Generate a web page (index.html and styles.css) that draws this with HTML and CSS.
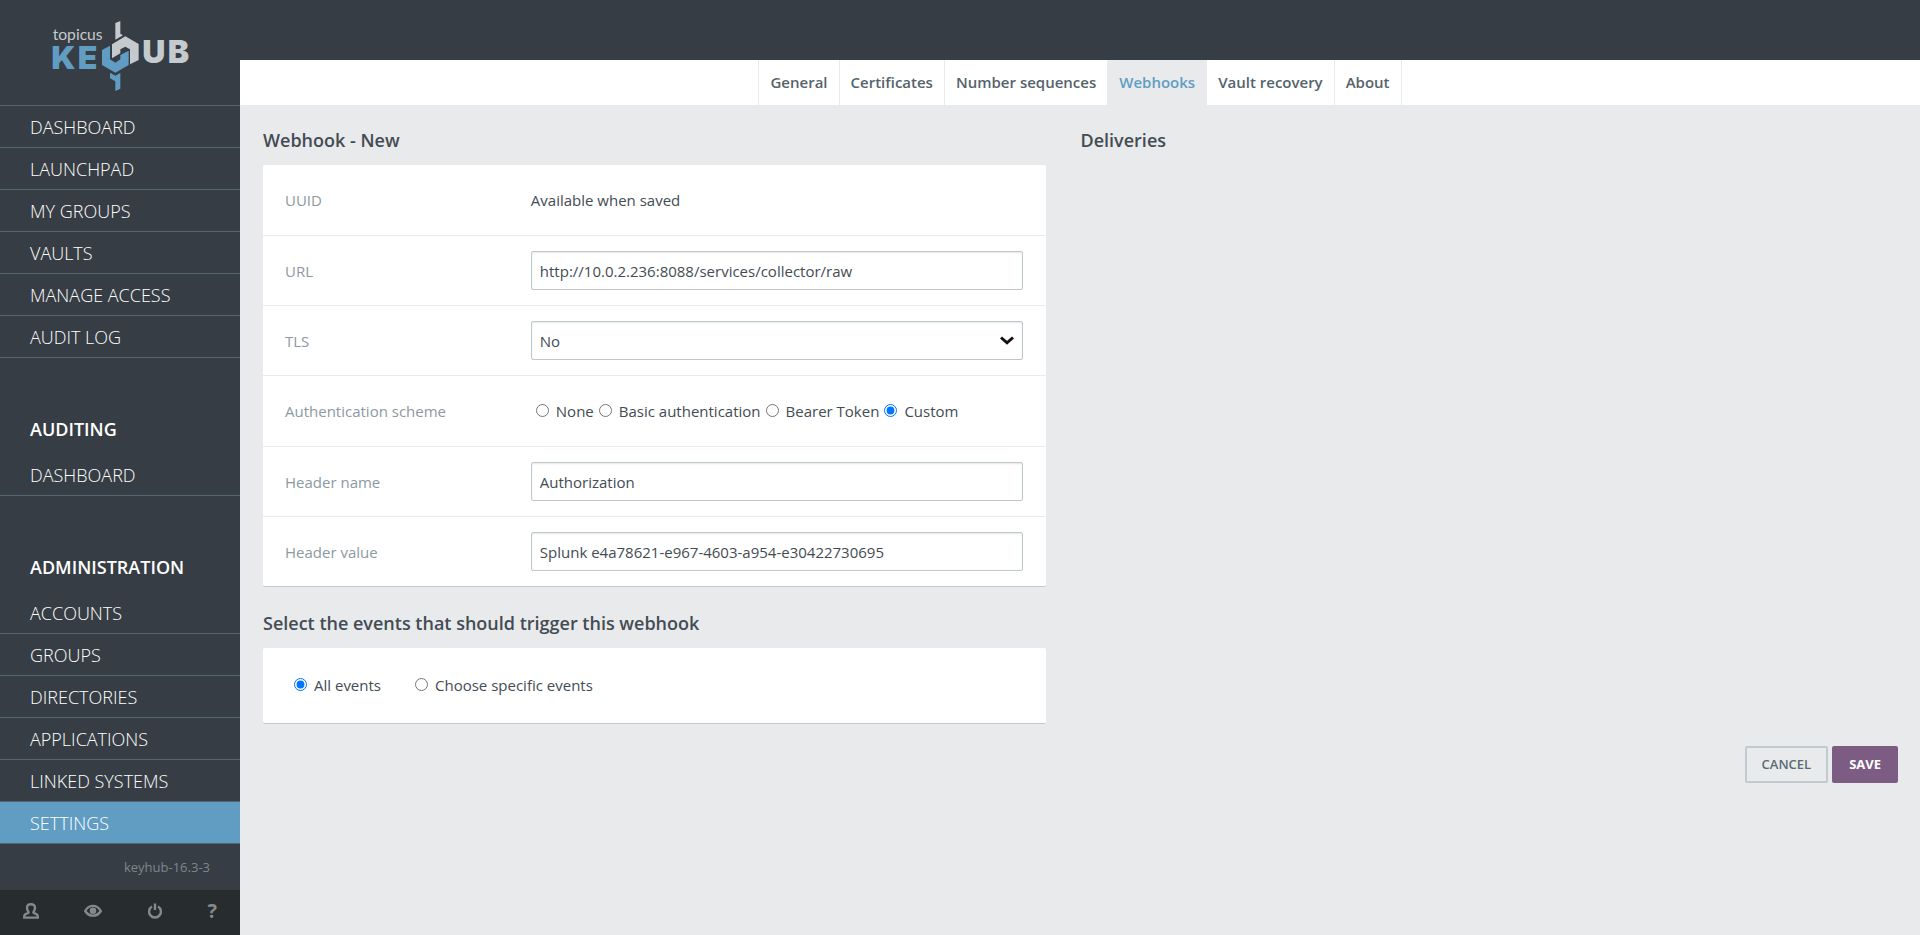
FILE: index.html
```html
<!DOCTYPE html>
<html lang="en">
<head>
<meta charset="utf-8">
<meta name="viewport" content="width=device-width, initial-scale=1">
<title>Topicus KeyHub</title>
<link rel="stylesheet" href="styles.css">
</head>
<body>
<div class="app">
  <aside class="sidebar">
    <a class="logo" href="#" aria-label="Topicus KeyHub">
      <svg class="logo-art" viewBox="150 54 420 225" role="img">
        <text class="logo-owner" x="158" y="121">topicus</text>
        <text class="logo-key" x="154 233" y="207">KE</text>
        <text class="logo-hub" x="427 503" y="190">UB</text>
        <path class="logo-gray" d="M346 69L361 63V101L369 106L346 119Z"/>
        <path class="logo-gray" d="M336 133L376 109L416 132V180L390 193V148L376 140L361 148V160L336 175Z"/>
        <path class="logo-blue" d="M306 150L330 137V178L346 188L361 178V165L386 152V195L346 218L306 195Z"/>
        <path class="logo-blue" d="M330 218L346 227L361 219V266L346 273V244L330 235Z"/>
      </svg>
    </a>
    <nav class="menu">
      <a class="menu-item" href="#">Dashboard</a>
      <a class="menu-item" href="#">Launchpad</a>
      <a class="menu-item" href="#">My groups</a>
      <a class="menu-item" href="#">Vaults</a>
      <a class="menu-item" href="#">Manage access</a>
      <a class="menu-item" href="#">Audit log</a>
      <h2 class="menu-heading">Auditing</h2>
      <a class="menu-item" href="#">Dashboard</a>
      <h2 class="menu-heading">Administration</h2>
      <a class="menu-item" href="#">Accounts</a>
      <a class="menu-item" href="#">Groups</a>
      <a class="menu-item" href="#">Directories</a>
      <a class="menu-item" href="#">Applications</a>
      <a class="menu-item" href="#">Linked systems</a>
      <a class="menu-item menu-item-active" href="#" aria-current="page">Settings</a>
    </nav>
    <p class="version">keyhub-16.3-3</p>
    <div class="tools">
      <button class="tool" type="button" aria-label="Profile">
        <svg width="16" height="16" viewBox="0 0 16 16"><path class="tool-line" d="M1.200 14.600C1 11.500 2.500 10.800 5.500 9.800C6.200 9 4 7.800 4 4.800C4 2.500 5.500 1.200 8 1.200S12 2.500 12 4.800C12 7.800 9.800 9 10.500 9.800C13.500 10.800 15 11.500 14.800 14.600Z"/></svg>
      </button>
      <button class="tool" type="button" aria-label="View">
        <svg width="18" height="16" viewBox="0 0 18 16"><path class="tool-line" d="M1.200 8C5 1.200 13 1.200 16.800 8C13 14.200 5 14.200 1.200 8Z"/><circle class="tool-fill" cx="9" cy="7.800" r="3.300"/></svg>
      </button>
      <button class="tool" type="button" aria-label="Log out">
        <svg width="16" height="16" viewBox="0 0 16 16"><path class="tool-line" d="M5 3.500A5.900 5.900 0 1 0 11 3.500"/><path class="tool-line" d="M8 0.500V7"/></svg>
      </button>
      <button class="tool" type="button" aria-label="Help">?</button>
    </div>
  </aside>

  <div class="page">
    <header class="topbar"></header>
    <nav class="tabs">
      <a class="tab" href="#">General</a>
      <a class="tab" href="#">Certificates</a>
      <a class="tab" href="#">Number sequences</a>
      <a class="tab tab-active" href="#" aria-current="page">Webhooks</a>
      <a class="tab" href="#">Vault recovery</a>
      <a class="tab" href="#">About</a>
    </nav>
    <main class="content">
      <form class="form">
        <div class="columns">
          <div class="column-main">
            <h1 class="title">Webhook - New</h1>
            <div class="panel">
              <div class="row row-plain">
                <span class="label">UUID</span>
                <span>Available when saved</span>
              </div>
              <div class="row">
                <label class="label" for="url">URL</label>
                <input class="field" id="url" type="text" value="http://10.0.2.236:8088/services/collector/raw">
              </div>
              <div class="row">
                <label class="label" for="tls">TLS</label>
                <div class="select-wrap">
                  <select class="field" id="tls"><option>No</option><option>Yes</option></select>
                  <svg class="chevron" width="14" height="9" viewBox="0 0 14 9"><path d="M1 1.500L7 6.800L13 1.500"/></svg>
                </div>
              </div>
              <div class="row row-plain">
                <span class="label" id="scheme">Authentication scheme</span>
                <div class="schemes" role="radiogroup" aria-labelledby="scheme">
                  <label class="choice"><input type="radio" name="scheme">None</label>
                  <label class="choice"><input type="radio" name="scheme">Basic authentication</label>
                  <label class="choice"><input type="radio" name="scheme">Bearer Token</label>
                  <label class="choice"><input type="radio" name="scheme" checked>Custom</label>
                </div>
              </div>
              <div class="row">
                <label class="label" for="header-name">Header name</label>
                <input class="field" id="header-name" type="text" value="Authorization">
              </div>
              <div class="row">
                <label class="label" for="header-value">Header value</label>
                <input class="field" id="header-value" type="text" value="Splunk e4a78621-e967-4603-a954-e30422730695">
              </div>
            </div>
            <h2 class="title">Select the events that should trigger this webhook</h2>
            <div class="panel events">
              <label class="choice"><input type="radio" name="events" checked>All events</label>
              <label class="choice"><input type="radio" name="events">Choose specific events</label>
            </div>
          </div>
          <div>
            <h2 class="title">Deliveries</h2>
          </div>
        </div>
        <div class="actions">
          <button class="button" type="button">Cancel</button>
          <button class="button button-primary" type="submit">Save</button>
        </div>
      </form>
    </main>
  </div>
</div>
</body>
</html>
```
FILE: styles.css
```css
* {
  box-sizing: border-box;
}

body {
  margin: 0;
  background: #e8eaec;
  color: #434c53;
  font: 15px/20px "Open Sans", "Noto Sans", sans-serif;
}

a {
  color: inherit;
  text-decoration: none;
}

.app {
  display: flex;
  min-height: 100vh;
}

/* Sidebar */

.sidebar {
  display: flex;
  flex: none;
  flex-direction: column;
  width: 240px;
  background: #363d44;
  color: #fff;
}

.logo {
  padding: 18px 50px 12px;
  border-bottom: 1px solid #536770;
}

.logo-art {
  display: block;
  width: 140px;
  height: 75px;
}

.logo-owner {
  fill: #c5cace;
  font: 47px Lato, sans-serif;
}

.logo-key,
.logo-hub {
  font: 900 96px Inter, sans-serif;
}

.logo-key,
.logo-blue {
  fill: #619dc3;
}

.logo-hub,
.logo-gray {
  fill: #c5cace;
}

.menu-item {
  display: block;
  padding: 9px 30px 8px;
  border-bottom: 1px solid #536770;
  font-size: 18px;
  font-weight: 300;
  line-height: 24px;
  text-transform: uppercase;
}

.menu-item-active {
  background: #619dc3;
}

.menu-heading {
  margin: 0;
  padding: 59px 30px 13px;
  font-size: 18px;
  font-weight: 600;
  line-height: 24px;
  text-transform: uppercase;
}

.version {
  margin: 0;
  padding: 13px 30px 12px;
  color: #7e878c;
  font-size: 13px;
  text-align: right;
}

.tools {
  display: flex;
  align-items: center;
  justify-content: space-between;
  height: 45px;
  margin-top: auto;
  padding: 0 23px 4px;
  background: #272c2e;
}

.tool {
  display: flex;
  padding: 0;
  border: 0;
  background: none;
  color: #84898c;
  font: 700 20px/20px "Open Sans", sans-serif;
}

.tool-line {
  fill: none;
  stroke: currentColor;
  stroke-width: 2.4;
}

.tool-fill {
  fill: currentColor;
}

/* Page */

.page {
  flex: 1;
  min-width: 0;
}

.topbar {
  height: 60px;
  background: #363d44;
}

.tabs {
  display: flex;
  justify-content: center;
  background: #fff;
}

.tab {
  padding: 12px 11px 13px;
  border-left: 1px solid #e8eaec;
  color: #55636c;
  font-weight: 600;
}

.tab:last-child {
  border-right: 1px solid #e8eaec;
}

.tab-active {
  background: #e8eaec;
  color: #619dc3;
}

.content {
  padding: 0 22px 22px 23px;
}

.columns {
  display: grid;
  grid-template-columns: 1fr 1fr;
}

.column-main {
  padding-right: 35px;
}

.title {
  margin: 0;
  padding: 23px 0 13px;
  font-size: 18px;
  font-weight: 600;
  line-height: 24px;
}

.panel {
  margin-bottom: 1px;
  border-bottom: 1px solid #c3cacd;
  border-radius: 2px;
  background: #fff;
}

.row {
  display: grid;
  grid-template-columns: 1fr 2fr;
  align-items: center;
  padding: 15px 23px 15px 22px;
}

.row + .row {
  border-top: 1px solid #e8eaec;
}

.row-plain {
  padding-top: 25px;
  padding-bottom: 25px;
}

.label {
  color: #8c999f;
}

.field {
  display: block;
  width: 100%;
  height: 39px;
  padding: 0 8px;
  border: 1px solid #c0c7ca;
  border-radius: 2px;
  appearance: none;
  background: #fff;
  box-shadow: inset 0 1px 2px #e4e7e8;
  color: inherit;
  font: inherit;
}

.select-wrap {
  position: relative;
}

.chevron {
  position: absolute;
  top: 15px;
  right: 9px;
  fill: none;
  stroke: #111;
  stroke-width: 3;
  pointer-events: none;
}

.schemes {
  display: flex;
  flex-wrap: wrap;
}

.choice {
  display: flex;
  align-items: center;
}

.choice input {
  margin: 0 7px 2px 5px;
}

.events {
  display: flex;
  gap: 29px;
  padding: 27px 26px 28px;
}

.actions {
  display: flex;
  justify-content: flex-end;
  gap: 4px;
  padding-top: 21px;
}

.button {
  padding: 7px 15px 8px;
  border: 2px solid #c3cacf;
  border-radius: 2px;
  background: none;
  color: #5c6a72;
  font: 600 13px/18px "Open Sans", "Noto Sans", sans-serif;
  text-transform: uppercase;
}

.button-primary {
  border-color: #7c5c83;
  background: #7c5c83;
  color: #fff;
  font-weight: 700;
}
```
